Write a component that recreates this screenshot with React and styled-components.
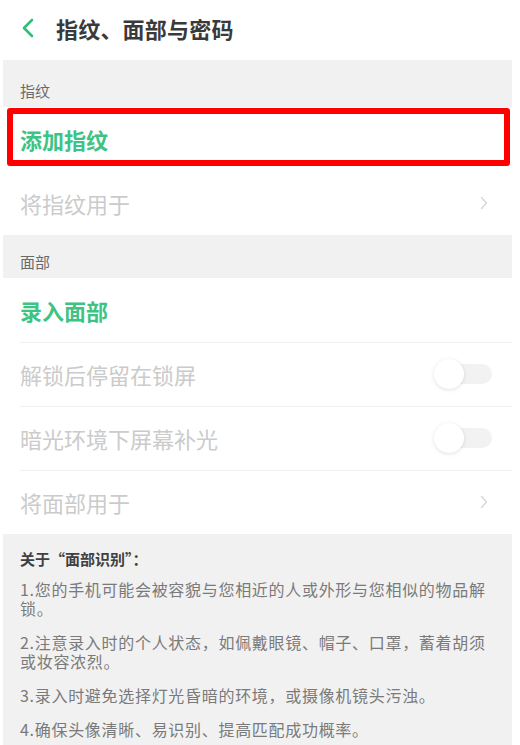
import React from "react";
import styled, { createGlobalStyle } from "styled-components";

const Global = createGlobalStyle`
  html, body { margin: 0; padding: 0; background: #ffffff; }
  body { font-family: "Noto Sans CJK SC", "Noto Sans", sans-serif; }
  * { box-sizing: border-box; }
`;

const Page = styled.div`
  width: 520px;
  height: 745px;
  overflow: hidden;
  background: #ffffff;
  padding: 0 8px 0 3px;
`;

const TopBar = styled.div`
  height: 60px;
  display: flex;
  align-items: center;
  padding: 0 0 4px 18px;
  gap: 21px;
`;

const BackIcon = styled.svg`
  width: 14px;
  height: 20px;
  flex: none;
`;

const Title = styled.h1`
  margin: 0;
  font-size: 22px;
  line-height: 28px;
  font-weight: 700;
  color: #3a3a3a;
  letter-spacing: 0.2px;
`;

const GroupHeader = styled.div`
  height: ${(p) => p.$h}px;
  background: #f1f1f1;
  display: flex;
  align-items: flex-end;
  padding: 0 0 8px 17px;
  font-size: 15px;
  line-height: 16px;
  color: #6a6a6a;
`;

const RowWrap = styled.div`
  position: relative;
`;

const Row = styled.div`
  position: relative;
  height: 64px;
  display: flex;
  align-items: center;
  justify-content: space-between;
  padding: 0 22px 0 17px;
  background: #ffffff;

  &::before {
    content: "";
    display: ${(p) => (p.$divider ? "block" : "none")};
    position: absolute;
    top: 0;
    left: 17px;
    right: 0;
    height: 1px;
    background: #f0f0f0;
  }
`;

const RowText = styled.span`
  font-size: 22px;
  line-height: 28px;
  font-weight: ${(p) => (p.$accent ? 700 : 400)};
  color: ${(p) => (p.$accent ? "#3dc383" : "#cbcbcb")};
`;

const Highlight = styled.div`
  position: absolute;
  top: 1px;
  left: 4px;
  right: 2px;
  bottom: 5px;
  border: 6px solid #ff0000;
  border-radius: 3px;
  pointer-events: none;
`;

const Chevron = styled.svg`
  width: 8px;
  height: 14px;
  flex: none;
  margin-right: 2px;
`;

const Toggle = styled.div`
  position: relative;
  width: 58px;
  height: 30px;
  flex: none;
  margin-right: -2px;
`;

const Track = styled.div`
  position: absolute;
  left: 14px;
  right: 0;
  top: 5px;
  height: 20px;
  border-radius: 10px;
  background: #f2f2f2;
`;

const Knob = styled.div`
  position: absolute;
  left: 0;
  top: 0;
  width: 30px;
  height: 30px;
  border-radius: 50%;
  background: #ffffff;
  box-shadow: 0 1px 4px rgba(0, 0, 0, 0.12);
`;

const About = styled.div`
  background: #f1f1f1;
  padding: 15px 24px 20px 17px;
  min-height: 209px;
`;

const AboutTitle = styled.div`
  font-size: 15px;
  line-height: 20px;
  font-weight: 700;
  color: #404040;
`;

const Para = styled.p`
  margin: ${(p) => (p.$first ? "11px" : "15px")} 0 0;
  font-size: 16px;
  line-height: 19px;
  letter-spacing: 0.7px;
  color: #7a7a7a;
`;

const ChevronRight = () => (
  <Chevron viewBox="0 0 8 14">
    <path d="M1.5 1.5 L6.5 7 L1.5 12.5" fill="none" stroke="#d6d6d6" strokeWidth="1.4" strokeLinecap="round" strokeLinejoin="round" />
  </Chevron>
);

const Switch = () => (
  <Toggle>
    <Track />
    <Knob />
  </Toggle>
);

export default function App() {
  return (
    <Page>
      <Global />
      <TopBar>
        <BackIcon viewBox="0 0 14 20">
          <path d="M11 2 L3 10 L11 18" fill="none" stroke="#2fbf78" strokeWidth="2.6" strokeLinecap="round" strokeLinejoin="round" />
        </BackIcon>
        <Title>指纹、面部与密码</Title>
      </TopBar>

      <GroupHeader $h={47}>指纹</GroupHeader>
      <RowWrap>
        <Row>
          <RowText $accent>添加指纹</RowText>
        </Row>
        <Highlight />
      </RowWrap>
      <Row>
        <RowText>将指纹用于</RowText>
        <ChevronRight />
      </Row>

      <GroupHeader $h={43}>面部</GroupHeader>
      <Row>
        <RowText $accent>录入面部</RowText>
      </Row>
      <Row $divider>
        <RowText>解锁后停留在锁屏</RowText>
        <Switch />
      </Row>
      <Row $divider>
        <RowText>暗光环境下屏幕补光</RowText>
        <Switch />
      </Row>
      <Row $divider>
        <RowText>将面部用于</RowText>
        <ChevronRight />
      </Row>

      <About>
        <AboutTitle>关于“面部识别”：</AboutTitle>
        <Para $first>1.您的手机可能会被容貌与您相近的人或外形与您相似的物品解锁。</Para>
        <Para>2.注意录入时的个人状态，如佩戴眼镜、帽子、口罩，蓄着胡须或妆容浓烈。</Para>
        <Para>3.录入时避免选择灯光昏暗的环境，或摄像机镜头污浊。</Para>
        <Para>4.确保头像清晰、易识别、提高匹配成功概率。</Para>
      </About>
    </Page>
  );
}
